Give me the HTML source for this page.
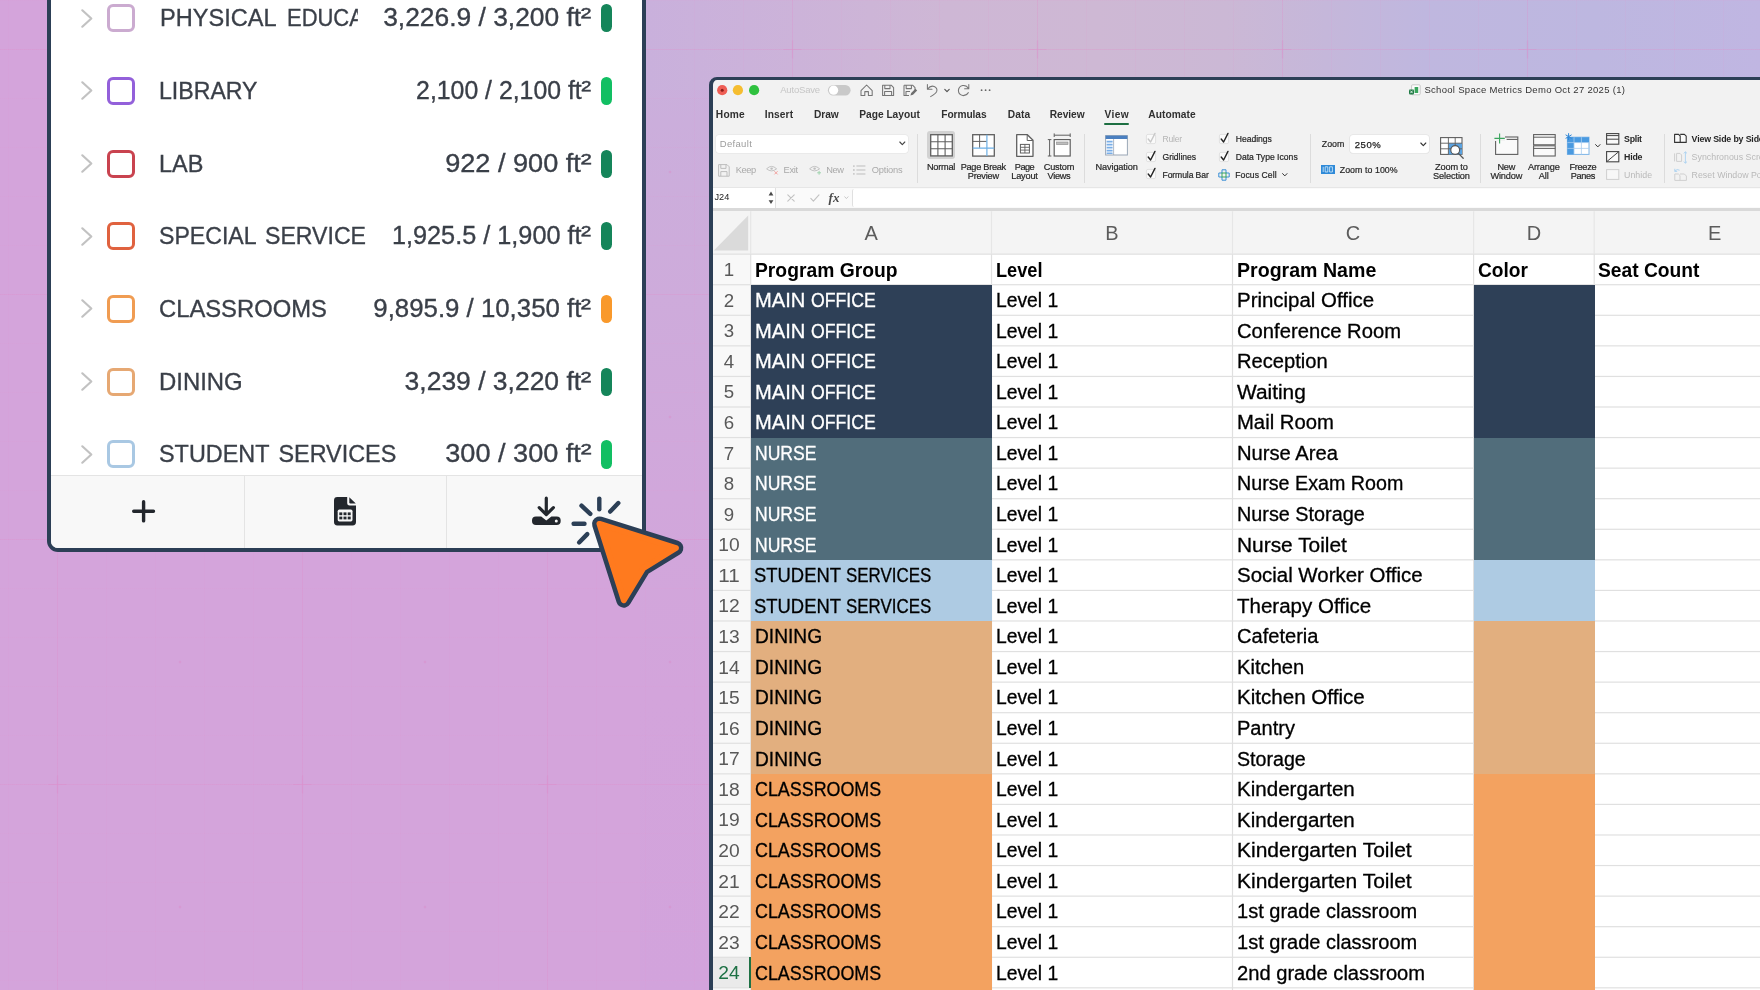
<!DOCTYPE html>
<html lang="en"><head><meta charset="utf-8"><title>School Space Metrics</title>
<style>
html,body{margin:0;padding:0}
body{width:1760px;height:990px;overflow:hidden;position:relative;background:#d5a5db;font-family:"Liberation Sans",sans-serif}
#root{position:absolute;left:0;top:0;width:1760px;height:990px;overflow:hidden;will-change:transform}
.t{position:absolute;white-space:nowrap;line-height:1;display:block}
svg{position:absolute;overflow:visible}
#bg{position:absolute;left:0;top:0;width:1760px;height:990px;background:#d4a4db}
#bgg{position:absolute;left:640px;top:0;width:80px;height:990px;background:linear-gradient(to bottom,#c9b0dc 0,#cdacdb 25%,#d1a7db 50%,#d3a4db 70%,#d2a3dc 100%)}
#bgt{position:absolute;left:646px;top:0;width:1114px;height:90px;background:linear-gradient(to right,#c9b0dc 0,#ccb3d9 150px,#ceb7d5 300px,#ceb8d4 450px,#cbb8d5 580px,#c5b7da 680px,#bfb7df 780px,#bdb7e0 950px,#c0b6e2 1114px)}
#grid{position:absolute;left:0;top:0;width:1760px;height:990px;
background-image:
linear-gradient(to right, rgba(226,130,196,0.17) 1px, transparent 1px),
linear-gradient(to bottom, rgba(226,130,196,0.17) 1px, transparent 1px),
linear-gradient(to right, rgba(226,150,205,0.10) 1px, transparent 1px),
linear-gradient(to bottom, rgba(226,150,205,0.10) 1px, transparent 1px);
background-size:245px 245px,245px 245px,49px 49px,49px 49px;
background-position:57px 0,0 49px,8px 0,0 0}
</style></head><body><div id="root">
<div id="bg"></div><div id="bgg"></div><div id="bgt"></div><div id="grid"></div>
<svg style="left:0.00px;top:0.00px" width="1760" height="990" viewBox="0 0 1760 990" ><path d="M48.5 49.5H66.5M57.5 40.5V58.5" stroke="#de86c6" stroke-opacity=".28" stroke-width="1.2"/><circle cx="180.0" cy="172.0" r="1.3" fill="#de86c6" fill-opacity=".35"/><path d="M48.5 294.5H66.5M57.5 285.5V303.5" stroke="#de86c6" stroke-opacity=".28" stroke-width="1.2"/><circle cx="180.0" cy="417.0" r="1.3" fill="#de86c6" fill-opacity=".35"/><path d="M48.5 539.5H66.5M57.5 530.5V548.5" stroke="#de86c6" stroke-opacity=".28" stroke-width="1.2"/><circle cx="180.0" cy="662.0" r="1.3" fill="#de86c6" fill-opacity=".35"/><path d="M48.5 784.5H66.5M57.5 775.5V793.5" stroke="#de86c6" stroke-opacity=".28" stroke-width="1.2"/><circle cx="180.0" cy="907.0" r="1.3" fill="#de86c6" fill-opacity=".35"/><path d="M48.5 1029.5H66.5M57.5 1020.5V1038.5" stroke="#de86c6" stroke-opacity=".28" stroke-width="1.2"/><circle cx="180.0" cy="1152.0" r="1.3" fill="#de86c6" fill-opacity=".35"/><path d="M293.5 49.5H311.5M302.5 40.5V58.5" stroke="#de86c6" stroke-opacity=".28" stroke-width="1.2"/><circle cx="425.0" cy="172.0" r="1.3" fill="#de86c6" fill-opacity=".35"/><path d="M293.5 294.5H311.5M302.5 285.5V303.5" stroke="#de86c6" stroke-opacity=".28" stroke-width="1.2"/><circle cx="425.0" cy="417.0" r="1.3" fill="#de86c6" fill-opacity=".35"/><path d="M293.5 539.5H311.5M302.5 530.5V548.5" stroke="#de86c6" stroke-opacity=".28" stroke-width="1.2"/><circle cx="425.0" cy="662.0" r="1.3" fill="#de86c6" fill-opacity=".35"/><path d="M293.5 784.5H311.5M302.5 775.5V793.5" stroke="#de86c6" stroke-opacity=".28" stroke-width="1.2"/><circle cx="425.0" cy="907.0" r="1.3" fill="#de86c6" fill-opacity=".35"/><path d="M293.5 1029.5H311.5M302.5 1020.5V1038.5" stroke="#de86c6" stroke-opacity=".28" stroke-width="1.2"/><circle cx="425.0" cy="1152.0" r="1.3" fill="#de86c6" fill-opacity=".35"/><path d="M538.5 49.5H556.5M547.5 40.5V58.5" stroke="#de86c6" stroke-opacity=".28" stroke-width="1.2"/><circle cx="670.0" cy="172.0" r="1.3" fill="#de86c6" fill-opacity=".35"/><path d="M538.5 294.5H556.5M547.5 285.5V303.5" stroke="#de86c6" stroke-opacity=".28" stroke-width="1.2"/><circle cx="670.0" cy="417.0" r="1.3" fill="#de86c6" fill-opacity=".35"/><path d="M538.5 539.5H556.5M547.5 530.5V548.5" stroke="#de86c6" stroke-opacity=".28" stroke-width="1.2"/><circle cx="670.0" cy="662.0" r="1.3" fill="#de86c6" fill-opacity=".35"/><path d="M538.5 784.5H556.5M547.5 775.5V793.5" stroke="#de86c6" stroke-opacity=".28" stroke-width="1.2"/><circle cx="670.0" cy="907.0" r="1.3" fill="#de86c6" fill-opacity=".35"/><path d="M538.5 1029.5H556.5M547.5 1020.5V1038.5" stroke="#de86c6" stroke-opacity=".28" stroke-width="1.2"/><circle cx="670.0" cy="1152.0" r="1.3" fill="#de86c6" fill-opacity=".35"/><path d="M783.5 49.5H801.5M792.5 40.5V58.5" stroke="#de86c6" stroke-opacity=".28" stroke-width="1.2"/><circle cx="915.0" cy="172.0" r="1.3" fill="#de86c6" fill-opacity=".35"/><path d="M783.5 294.5H801.5M792.5 285.5V303.5" stroke="#de86c6" stroke-opacity=".28" stroke-width="1.2"/><circle cx="915.0" cy="417.0" r="1.3" fill="#de86c6" fill-opacity=".35"/><path d="M783.5 539.5H801.5M792.5 530.5V548.5" stroke="#de86c6" stroke-opacity=".28" stroke-width="1.2"/><circle cx="915.0" cy="662.0" r="1.3" fill="#de86c6" fill-opacity=".35"/><path d="M783.5 784.5H801.5M792.5 775.5V793.5" stroke="#de86c6" stroke-opacity=".28" stroke-width="1.2"/><circle cx="915.0" cy="907.0" r="1.3" fill="#de86c6" fill-opacity=".35"/><path d="M783.5 1029.5H801.5M792.5 1020.5V1038.5" stroke="#de86c6" stroke-opacity=".28" stroke-width="1.2"/><circle cx="915.0" cy="1152.0" r="1.3" fill="#de86c6" fill-opacity=".35"/><path d="M1028.5 49.5H1046.5M1037.5 40.5V58.5" stroke="#de86c6" stroke-opacity=".28" stroke-width="1.2"/><circle cx="1160.0" cy="172.0" r="1.3" fill="#de86c6" fill-opacity=".35"/><path d="M1028.5 294.5H1046.5M1037.5 285.5V303.5" stroke="#de86c6" stroke-opacity=".28" stroke-width="1.2"/><circle cx="1160.0" cy="417.0" r="1.3" fill="#de86c6" fill-opacity=".35"/><path d="M1028.5 539.5H1046.5M1037.5 530.5V548.5" stroke="#de86c6" stroke-opacity=".28" stroke-width="1.2"/><circle cx="1160.0" cy="662.0" r="1.3" fill="#de86c6" fill-opacity=".35"/><path d="M1028.5 784.5H1046.5M1037.5 775.5V793.5" stroke="#de86c6" stroke-opacity=".28" stroke-width="1.2"/><circle cx="1160.0" cy="907.0" r="1.3" fill="#de86c6" fill-opacity=".35"/><path d="M1028.5 1029.5H1046.5M1037.5 1020.5V1038.5" stroke="#de86c6" stroke-opacity=".28" stroke-width="1.2"/><circle cx="1160.0" cy="1152.0" r="1.3" fill="#de86c6" fill-opacity=".35"/><path d="M1273.5 49.5H1291.5M1282.5 40.5V58.5" stroke="#de86c6" stroke-opacity=".28" stroke-width="1.2"/><circle cx="1405.0" cy="172.0" r="1.3" fill="#de86c6" fill-opacity=".35"/><path d="M1273.5 294.5H1291.5M1282.5 285.5V303.5" stroke="#de86c6" stroke-opacity=".28" stroke-width="1.2"/><circle cx="1405.0" cy="417.0" r="1.3" fill="#de86c6" fill-opacity=".35"/><path d="M1273.5 539.5H1291.5M1282.5 530.5V548.5" stroke="#de86c6" stroke-opacity=".28" stroke-width="1.2"/><circle cx="1405.0" cy="662.0" r="1.3" fill="#de86c6" fill-opacity=".35"/><path d="M1273.5 784.5H1291.5M1282.5 775.5V793.5" stroke="#de86c6" stroke-opacity=".28" stroke-width="1.2"/><circle cx="1405.0" cy="907.0" r="1.3" fill="#de86c6" fill-opacity=".35"/><path d="M1273.5 1029.5H1291.5M1282.5 1020.5V1038.5" stroke="#de86c6" stroke-opacity=".28" stroke-width="1.2"/><circle cx="1405.0" cy="1152.0" r="1.3" fill="#de86c6" fill-opacity=".35"/><path d="M1518.5 49.5H1536.5M1527.5 40.5V58.5" stroke="#de86c6" stroke-opacity=".28" stroke-width="1.2"/><circle cx="1650.0" cy="172.0" r="1.3" fill="#de86c6" fill-opacity=".35"/><path d="M1518.5 294.5H1536.5M1527.5 285.5V303.5" stroke="#de86c6" stroke-opacity=".28" stroke-width="1.2"/><circle cx="1650.0" cy="417.0" r="1.3" fill="#de86c6" fill-opacity=".35"/><path d="M1518.5 539.5H1536.5M1527.5 530.5V548.5" stroke="#de86c6" stroke-opacity=".28" stroke-width="1.2"/><circle cx="1650.0" cy="662.0" r="1.3" fill="#de86c6" fill-opacity=".35"/><path d="M1518.5 784.5H1536.5M1527.5 775.5V793.5" stroke="#de86c6" stroke-opacity=".28" stroke-width="1.2"/><circle cx="1650.0" cy="907.0" r="1.3" fill="#de86c6" fill-opacity=".35"/><path d="M1518.5 1029.5H1536.5M1527.5 1020.5V1038.5" stroke="#de86c6" stroke-opacity=".28" stroke-width="1.2"/><circle cx="1650.0" cy="1152.0" r="1.3" fill="#de86c6" fill-opacity=".35"/><path d="M1763.5 49.5H1781.5M1772.5 40.5V58.5" stroke="#de86c6" stroke-opacity=".28" stroke-width="1.2"/><circle cx="1895.0" cy="172.0" r="1.3" fill="#de86c6" fill-opacity=".35"/><path d="M1763.5 294.5H1781.5M1772.5 285.5V303.5" stroke="#de86c6" stroke-opacity=".28" stroke-width="1.2"/><circle cx="1895.0" cy="417.0" r="1.3" fill="#de86c6" fill-opacity=".35"/><path d="M1763.5 539.5H1781.5M1772.5 530.5V548.5" stroke="#de86c6" stroke-opacity=".28" stroke-width="1.2"/><circle cx="1895.0" cy="662.0" r="1.3" fill="#de86c6" fill-opacity=".35"/><path d="M1763.5 784.5H1781.5M1772.5 775.5V793.5" stroke="#de86c6" stroke-opacity=".28" stroke-width="1.2"/><circle cx="1895.0" cy="907.0" r="1.3" fill="#de86c6" fill-opacity=".35"/><path d="M1763.5 1029.5H1781.5M1772.5 1020.5V1038.5" stroke="#de86c6" stroke-opacity=".28" stroke-width="1.2"/><circle cx="1895.0" cy="1152.0" r="1.3" fill="#de86c6" fill-opacity=".35"/></svg>
<div style="position:absolute;left:47px;top:-20px;width:591px;height:564px;border:4px solid #2c3f56;border-radius:0 0 11px 11px;background:#fff;overflow:hidden"><div style="position:absolute;left:0;top:490.5px;width:100%;height:80px;background:#f8f8f8;border-top:1px solid #e4e4e4"></div><div style="position:absolute;left:193.2px;top:491px;width:1px;height:80px;background:#e4e4e4"></div><div style="position:absolute;left:395.0px;top:491px;width:1px;height:80px;background:#e4e4e4"></div></div>
<svg style="left:81.00px;top:8.80px" width="12" height="19" viewBox="0 0 12 19" ><path d="M1.3 1.3L10.3 9.5L1.3 17.7" fill="none" stroke="#c2c2c2" stroke-width="2.2" stroke-linecap="round" stroke-linejoin="round"/></svg>
<div style="position:absolute;left:106.80px;top:4.30px;width:22.00px;height:22.00px;border:3px solid #cbabd0;border-radius:6px;background:#fff"></div>
<div style="position:absolute;left:601.00px;top:4.30px;width:10.80px;height:28.20px;background:#15855a;border-radius:5.4px"></div>
<svg style="left:81.00px;top:81.47px" width="12" height="19" viewBox="0 0 12 19" ><path d="M1.3 1.3L10.3 9.5L1.3 17.7" fill="none" stroke="#c2c2c2" stroke-width="2.2" stroke-linecap="round" stroke-linejoin="round"/></svg>
<div style="position:absolute;left:106.80px;top:76.97px;width:22.00px;height:22.00px;border:3px solid #9360da;border-radius:6px;background:#fff"></div>
<div style="position:absolute;left:601.00px;top:76.97px;width:10.80px;height:28.20px;background:#12bf63;border-radius:5.4px"></div>
<svg style="left:81.00px;top:154.14px" width="12" height="19" viewBox="0 0 12 19" ><path d="M1.3 1.3L10.3 9.5L1.3 17.7" fill="none" stroke="#c2c2c2" stroke-width="2.2" stroke-linecap="round" stroke-linejoin="round"/></svg>
<div style="position:absolute;left:106.80px;top:149.64px;width:22.00px;height:22.00px;border:3px solid #c9434f;border-radius:6px;background:#fff"></div>
<div style="position:absolute;left:601.00px;top:149.64px;width:10.80px;height:28.20px;background:#15855a;border-radius:5.4px"></div>
<svg style="left:81.00px;top:226.81px" width="12" height="19" viewBox="0 0 12 19" ><path d="M1.3 1.3L10.3 9.5L1.3 17.7" fill="none" stroke="#c2c2c2" stroke-width="2.2" stroke-linecap="round" stroke-linejoin="round"/></svg>
<div style="position:absolute;left:106.80px;top:222.31px;width:22.00px;height:22.00px;border:3px solid #e0623f;border-radius:6px;background:#fff"></div>
<div style="position:absolute;left:601.00px;top:222.31px;width:10.80px;height:28.20px;background:#15855a;border-radius:5.4px"></div>
<svg style="left:81.00px;top:299.48px" width="12" height="19" viewBox="0 0 12 19" ><path d="M1.3 1.3L10.3 9.5L1.3 17.7" fill="none" stroke="#c2c2c2" stroke-width="2.2" stroke-linecap="round" stroke-linejoin="round"/></svg>
<div style="position:absolute;left:106.80px;top:294.98px;width:22.00px;height:22.00px;border:3px solid #f09c52;border-radius:6px;background:#fff"></div>
<div style="position:absolute;left:601.00px;top:294.98px;width:10.80px;height:28.20px;background:#f9992b;border-radius:5.4px"></div>
<svg style="left:81.00px;top:372.15px" width="12" height="19" viewBox="0 0 12 19" ><path d="M1.3 1.3L10.3 9.5L1.3 17.7" fill="none" stroke="#c2c2c2" stroke-width="2.2" stroke-linecap="round" stroke-linejoin="round"/></svg>
<div style="position:absolute;left:106.80px;top:367.65px;width:22.00px;height:22.00px;border:3px solid #e6a873;border-radius:6px;background:#fff"></div>
<div style="position:absolute;left:601.00px;top:367.65px;width:10.80px;height:28.20px;background:#15855a;border-radius:5.4px"></div>
<svg style="left:81.00px;top:444.82px" width="12" height="19" viewBox="0 0 12 19" ><path d="M1.3 1.3L10.3 9.5L1.3 17.7" fill="none" stroke="#c2c2c2" stroke-width="2.2" stroke-linecap="round" stroke-linejoin="round"/></svg>
<div style="position:absolute;left:106.80px;top:440.32px;width:22.00px;height:22.00px;border:3px solid #a9c8e3;border-radius:6px;background:#fff"></div>
<div style="position:absolute;left:601.00px;top:440.32px;width:10.80px;height:28.20px;background:#12bf63;border-radius:5.4px"></div>
<svg style="left:131.80px;top:499.90px" width="23.2" height="22.6" viewBox="0 0 23.2 22.6" ><path d="M11.6 1.7V20.9M1.7 11.3H21.5" stroke="#23272d" stroke-width="3.4" stroke-linecap="round" fill="none"/></svg>
<svg style="left:334.00px;top:496.80px" width="22" height="28.4" viewBox="0 0 22 28.4" ><path d="M3.4 0H13.2V6.2Q13.2 8.6 15.6 8.6H22V25Q22 28.4 18.6 28.4H3.4Q0 28.4 0 25V3.4Q0 0 3.4 0Z" fill="#23272d"/><path d="M15.3 0.2L21.8 6.6H16.6Q15.3 6.6 15.3 5.3Z" fill="#23272d"/><rect x="3.7" y="12.6" width="14.8" height="11.8" rx="1.6" fill="#f8f8f8"/><rect x="5.3" y="15.4" width="3" height="2.8" fill="#23272d"/><rect x="5.3" y="19.6" width="3" height="2.8" fill="#23272d"/><rect x="9.5" y="15.4" width="3" height="2.8" fill="#23272d"/><rect x="9.5" y="19.6" width="3" height="2.8" fill="#23272d"/><rect x="13.7" y="15.4" width="3" height="2.8" fill="#23272d"/><rect x="13.7" y="19.6" width="3" height="2.8" fill="#23272d"/></svg>
<svg style="left:532.30px;top:497.30px" width="28.7" height="28" viewBox="0 0 28.7 28" ><path d="M14.3 1.2V17.2M7.2 10.6L14.3 17.6L21.4 10.6" fill="none" stroke="#23272d" stroke-width="3.2" stroke-linecap="round" stroke-linejoin="round"/><path d="M4 19.4H9.2L14.3 23.4L19.4 19.4H24.7Q28.7 19.4 28.7 23.4V24Q28.7 28 24.7 28H4Q0 28 0 24V23.4Q0 19.4 4 19.4Z" fill="#23272d"/><circle cx="24.3" cy="23.9" r="1.5" fill="#f8f8f8"/></svg>
<div style="position:absolute;left:709px;top:77.4px;width:1100px;height:960px;border:4px solid #2c3f56;border-top-width:3.6px;border-radius:8px 0 0 0;background:#f2f2f2;box-sizing:border-box"></div>
<svg style="left:713.00px;top:81.00px" width="300" height="22" viewBox="0 0 300 22" ><circle cx="9.2" cy="9.2" r="5.1" fill="#ee5e55"/><circle cx="9.2" cy="9.2" r="1.5" fill="#8c1d18"/><circle cx="24.9" cy="9.2" r="5.1" fill="#f5bd30"/><circle cx="41.1" cy="9.2" r="5.1" fill="#2fc13f"/><rect x="114.9" y="3.9" width="22.7" height="10.6" rx="5.3" fill="#c9c9c9"/><circle cx="120.6" cy="9.2" r="4.6" fill="#fff"/><path d="M148 9.6L153.6 4L159.2 9.6V14.4H155.4V10.6H151.8V14.4H148Z" fill="none" stroke="#757575" stroke-width="1.05" stroke-linejoin="round"/><path d="M169.6 4.2H178.2L180.6 6.6V14.4H169.6Z M171.8 4.2V7.6H177V4.2 M171.6 14.4V10.4H178.6V14.4" fill="none" stroke="#757575" stroke-width="1.05" stroke-linejoin="round"/><path d="M191 4.2H199.6L202 6.6V9.4M196 14.4H191V4.2 M193.2 4.2V7.6H198.4V4.2 M193 14.4V10.4H197" fill="none" stroke="#757575" stroke-width="1.05" stroke-linejoin="round"/><path d="M197.4 14.6L198.2 12L202.4 7.8L204.2 9.6L200 13.8Z" fill="#6e6e6e"/><path d="M214.4 3.6V8.2H219 M214.6 8Q217.4 4.2 221.2 5.4Q224.6 6.8 223.8 10.2Q223 12.8 217.6 15.6" fill="none" stroke="#757575" stroke-width="1.05" stroke-linecap="round" stroke-linejoin="round"/><path d="M231.8 8.4L234 10.6L236.2 8.4" fill="none" stroke="#555" stroke-width="1.2" stroke-linecap="round" stroke-linejoin="round"/><path d="M255.8 3.6V7.8H251.6 M255.6 7.6Q253.4 4 249.6 4.6Q245.6 5.6 245.4 9.6Q245.6 13.8 249.8 14.6Q253.6 14.8 255.4 11.6" fill="none" stroke="#757575" stroke-width="1.05" stroke-linecap="round" stroke-linejoin="round"/><circle cx="268.6" cy="9.2" r="0.9" fill="#666"/><circle cx="272.6" cy="9.2" r="0.9" fill="#666"/><circle cx="276.6" cy="9.2" r="0.9" fill="#666"/></svg>
<svg style="left:1408.50px;top:84.00px" width="12" height="12" viewBox="0 0 12 12" ><rect x="2.6" y="0.8" width="8.6" height="10" rx="1" fill="#fdfdfd" stroke="#bdbdbd" stroke-width=".8"/><rect x="5.6" y="3" width="3.6" height="6" fill="#3aa55d"/><rect x="0" y="5.4" width="5" height="5" rx=".8" fill="#1f7a44"/><path d="M1.3 6.6L3.7 9.2M3.7 6.6L1.3 9.2" stroke="#fff" stroke-width=".8"/></svg>
<div style="position:absolute;left:1104.00px;top:123.00px;width:25.40px;height:2.30px;background:#1d6f42;border-radius:1px"></div>
<div style="position:absolute;left:715.80px;top:134.70px;width:192.00px;height:18.00px;background:#fff;border-radius:3px;box-shadow:0 0 0 .5px #e2e2e2"></div>
<svg style="left:899.00px;top:141.00px" width="7" height="5" viewBox="0 0 7 5" ><path d="M.8 1L3.3 3.6L5.8 1" fill="none" stroke="#444" stroke-width="1.1" stroke-linecap="round" stroke-linejoin="round"/></svg>
<svg style="left:718.00px;top:163.50px" width="12" height="13" viewBox="0 0 12 13" ><path d="M.6 .6H9L11.2 2.8V12.2H.6Z M2.8 .6V4.4H8V.6 M2.8 12.2V7.6H9V12.2" fill="none" stroke="#bdbdbd" stroke-width="1"/></svg>
<svg style="left:766.00px;top:165.00px" width="13" height="10" viewBox="0 0 13 10" ><path d="M.6 3.8Q5.5 -1 10.6 3.8Q5.5 8 .6 3.8Z" fill="none" stroke="#bdbdbd" stroke-width=".9"/><circle cx="5.6" cy="3.6" r="1.2" fill="#bdbdbd"/><path d="M8.4 6.2L11.6 9.4M11.6 6.2L8.4 9.4" stroke="#f2a3a0" stroke-width="1"/></svg>
<svg style="left:808.50px;top:165.00px" width="13" height="10" viewBox="0 0 13 10" ><path d="M.6 3.8Q5.5 -1 10.6 3.8Q5.5 8 .6 3.8Z" fill="none" stroke="#bdbdbd" stroke-width=".9"/><circle cx="5.6" cy="3.6" r="1.2" fill="#bdbdbd"/><path d="M8.2 7.8H12M10.1 5.9V9.7" stroke="#9fd3ae" stroke-width="1"/></svg>
<svg style="left:853.40px;top:164.50px" width="13" height="10" viewBox="0 0 13 10" ><path d="M3.4 1H12.4M3.4 5H12.4M3.4 9H12.4" stroke="#bdbdbd" stroke-width="1"/><path d="M.9 .2V9.8" stroke="#bdbdbd" stroke-width="1.2" stroke-dasharray="1.8 2.1"/></svg>
<div style="position:absolute;left:916.70px;top:133.80px;width:1.00px;height:49.00px;background:#dcdcdc"></div>
<div style="position:absolute;left:1084.10px;top:133.80px;width:1.00px;height:49.00px;background:#dcdcdc"></div>
<div style="position:absolute;left:1309.70px;top:133.80px;width:1.00px;height:49.00px;background:#dcdcdc"></div>
<div style="position:absolute;left:1480.00px;top:133.80px;width:1.00px;height:49.00px;background:#dcdcdc"></div>
<div style="position:absolute;left:1663.90px;top:133.80px;width:1.00px;height:49.00px;background:#dcdcdc"></div>
<div style="position:absolute;left:926.80px;top:131.20px;width:28.60px;height:28.20px;background:#d2d2d2;border-radius:3px"></div>
<svg style="left:929.60px;top:134.00px" width="23" height="22.6" viewBox="0 0 23 22.6" ><rect x=".7" y=".7" width="21.6" height="21.2" fill="#fff" stroke="#5f5f5f" stroke-width="1.3"/><path d="M7.9 .7V21.9M15.1 .7V21.9M.7 7.8H22.3M.7 14.8H22.3" stroke="#5f5f5f" stroke-width="1.1"/></svg>
<svg style="left:972.20px;top:133.80px" width="23" height="22.8" viewBox="0 0 23 22.8" ><rect x=".7" y=".7" width="21.6" height="21.4" fill="#fff" stroke="#5f5f5f" stroke-width="1.3"/><path d="M7.6 .7V13.8M.7 7.4H14.6" stroke="#5f5f5f" stroke-width="1"/><path d="M14.9 .7V22M.7 14.2H22.3" stroke="#6db0e6" stroke-width="1.2"/></svg>
<svg style="left:1015.60px;top:133.60px" width="18" height="23" viewBox="0 0 18 23" ><path d="M.7 .7H11.4L17 6.3V22.3H.7Z" fill="#fff" stroke="#5f5f5f" stroke-width="1.3" stroke-linejoin="round"/><path d="M11.2 .9V6.5H16.8" fill="none" stroke="#5f5f5f" stroke-width="1"/><rect x="4.4" y="10.4" width="9" height="8.6" fill="none" stroke="#5f5f5f" stroke-width="1"/><path d="M4.4 13.3H13.4M4.4 16.1H13.4M8.9 10.4V19" stroke="#5f5f5f" stroke-width=".9"/></svg>
<svg style="left:1047.60px;top:134.20px" width="23" height="23" viewBox="0 0 23 23" ><path d="M6.2 1.2H22.2M6.2 -.6V3M22.2 -.6V3M1.6 5.6V22M-.2 5.6H3.4M-.2 22H3.4" stroke="#5f5f5f" stroke-width="1" fill="none"/><rect x="6.2" y="5.6" width="16" height="16.4" fill="#fff" stroke="#5f5f5f" stroke-width="1.2"/><rect x="8.6" y="8" width="11.4" height="2.6" fill="#bdbdbd" stroke="#8a8a8a" stroke-width=".6"/></svg>
<svg style="left:1105.40px;top:134.60px" width="23" height="20.6" viewBox="0 0 23 20.6" ><rect x=".6" y=".6" width="21.8" height="19.4" fill="#fff" stroke="#9aa7b6" stroke-width="1"/><rect x=".6" y=".6" width="21.8" height="3.4" fill="#4a7fc0"/><path d="M8.6 4V20" stroke="#9aa7b6" stroke-width=".8"/><path d="M1.6 6.6H7.6M1.6 9.6H7.6M1.6 12.6H7.6M1.6 15.6H7.6M1.6 18.2H7.6" stroke="#79aee8" stroke-width="1.6"/></svg>
<svg style="left:1146.10px;top:134.40px" width="10" height="10" viewBox="0 0 10 10" ><rect x=".4" y=".4" width="9.2" height="9.2" rx="1.6" fill="#fafafa" stroke="#dadada" stroke-width=".8"/><path d="M2.2 5L4.6 8L9 -0.6" fill="none" stroke="#c8c8c8" stroke-width="1.4" stroke-linecap="round" stroke-linejoin="round"/></svg>
<svg style="left:1146.10px;top:151.60px" width="10" height="10" viewBox="0 0 10 10" ><rect x=".4" y=".4" width="9.2" height="9.2" rx="1.6" fill="#fafafa" stroke="#dadada" stroke-width=".8"/><path d="M2.2 5L4.6 8L9 -0.6" fill="none" stroke="#222" stroke-width="1.4" stroke-linecap="round" stroke-linejoin="round"/></svg>
<svg style="left:1146.10px;top:169.10px" width="10" height="10" viewBox="0 0 10 10" ><rect x=".4" y=".4" width="9.2" height="9.2" rx="1.6" fill="#fafafa" stroke="#dadada" stroke-width=".8"/><path d="M2.2 5L4.6 8L9 -0.6" fill="none" stroke="#222" stroke-width="1.4" stroke-linecap="round" stroke-linejoin="round"/></svg>
<svg style="left:1219.30px;top:134.40px" width="10" height="10" viewBox="0 0 10 10" ><rect x=".4" y=".4" width="9.2" height="9.2" rx="1.6" fill="#fafafa" stroke="#dadada" stroke-width=".8"/><path d="M2.2 5L4.6 8L9 -0.6" fill="none" stroke="#222" stroke-width="1.4" stroke-linecap="round" stroke-linejoin="round"/></svg>
<svg style="left:1219.30px;top:151.60px" width="10" height="10" viewBox="0 0 10 10" ><rect x=".4" y=".4" width="9.2" height="9.2" rx="1.6" fill="#fafafa" stroke="#dadada" stroke-width=".8"/><path d="M2.2 5L4.6 8L9 -0.6" fill="none" stroke="#222" stroke-width="1.4" stroke-linecap="round" stroke-linejoin="round"/></svg>
<svg style="left:1218.00px;top:168.60px" width="12" height="12" viewBox="0 0 12 12" ><path d="M4 .8H8V4H11.2V8H8V11.2H4V8H.8V4H4Z" fill="none" stroke="#3a8fd6" stroke-width="1"/><rect x="4" y="4" width="4" height="4" fill="none" stroke="#3aa55d" stroke-width="1"/></svg>
<svg style="left:1281.60px;top:172.60px" width="6" height="4" viewBox="0 0 6 4" ><path d="M.6 .6L2.8 2.9L5 .6" fill="none" stroke="#333" stroke-width="1" stroke-linecap="round" stroke-linejoin="round"/></svg>
<div style="position:absolute;left:1350.20px;top:134.90px;width:79.00px;height:18.40px;background:#fff;border-radius:3px;box-shadow:0 0 0 .6px #dedede"></div>
<svg style="left:1420.00px;top:141.60px" width="7" height="5" viewBox="0 0 7 5" ><path d="M.8 1L3.3 3.6L5.8 1" fill="none" stroke="#333" stroke-width="1.1" stroke-linecap="round" stroke-linejoin="round"/></svg>
<div style="position:absolute;left:1321.20px;top:165.20px;width:13.70px;height:8.50px;background:#2f8ad8"></div>
<svg style="left:1321.20px;top:165.20px" width="14" height="9" viewBox="0 0 14 9" ><path d="M2.2 1.8V7M4.2 1.8H6.8V7H4.2ZM8.6 1.8H11.4V7H8.6Z" fill="none" stroke="#d8ecfb" stroke-width=".8"/></svg>
<svg style="left:1439.70px;top:136.60px" width="25" height="22" viewBox="0 0 25 22" ><rect x=".6" y=".6" width="21.4" height="16.8" fill="#fff" stroke="#5f5f5f" stroke-width="1.1"/><rect x="8.4" y="6.2" width="13.6" height="11.2" fill="#5aa2e0"/><path d="M.6 6.2H22M.6 11.8H22M8.4 .6V17.4M15.2 .6V17.4" stroke="#5f5f5f" stroke-width=".9"/><circle cx="15.2" cy="13" r="4.4" fill="#fff" stroke="#555" stroke-width="1.1"/><path d="M18.4 16.4L23.2 21.2" stroke="#555" stroke-width="1.3" stroke-linecap="round"/></svg>
<svg style="left:1493.90px;top:132.70px" width="25" height="22" viewBox="0 0 25 22" ><rect x="1.6" y="4" width="22.2" height="17.4" fill="#fafafa" stroke="#5f5f5f" stroke-width="1.1"/><path d="M12.6 6.4H23.8" stroke="#5f5f5f" stroke-width="1.1"/><rect x="0" y="0" width="11" height="8" fill="#f2f2f2"/><path d="M5.6 .4V10.6M.4 5.4H10.8" stroke="#3aa55d" stroke-width="1.1"/></svg>
<svg style="left:1532.60px;top:134.00px" width="23" height="23" viewBox="0 0 23 23" ><rect x=".6" y=".6" width="21.6" height="10.2" fill="#fafafa" stroke="#5f5f5f" stroke-width="1.1"/><path d="M.6 3.2H22.2" stroke="#5f5f5f" stroke-width="1"/><rect x=".6" y="11.8" width="21.6" height="10.2" fill="#fafafa" stroke="#5f5f5f" stroke-width="1.1"/><path d="M.6 14.4H22.2" stroke="#5f5f5f" stroke-width="1"/></svg>
<svg style="left:1565.20px;top:132.70px" width="25" height="22" viewBox="0 0 25 22" ><rect x="2.4" y="4.2" width="21.6" height="17.2" fill="#fff" stroke="#7db4e6" stroke-width="1"/><rect x="2.4" y="4.2" width="21.6" height="5.4" fill="#4a9ae0"/><rect x="2.4" y="4.2" width="6.6" height="17.2" fill="#4a9ae0"/><path d="M9 4.2V21.4M16.4 4.2V21.4M2.4 9.6H24M2.4 15.4H24" stroke="#a9cdee" stroke-width=".8"/><path d="M3.6 .2V7M.6 1.8L6.6 5.4M6.6 1.8L.6 5.4" stroke="#2f86d6" stroke-width="1"/></svg>
<svg style="left:1594.60px;top:143.60px" width="6" height="4" viewBox="0 0 6 4" ><path d="M.6 .6L2.8 2.9L5 .6" fill="none" stroke="#333" stroke-width="1" stroke-linecap="round" stroke-linejoin="round"/></svg>
<svg style="left:1605.90px;top:133.00px" width="14" height="12" viewBox="0 0 14 12" ><rect x=".6" y=".6" width="12.2" height="10.6" fill="#fafafa" stroke="#444" stroke-width="1.1"/><path d="M.6 2.6H12.8M.6 6.2H12.8" stroke="#444" stroke-width="1"/></svg>
<svg style="left:1605.90px;top:151.20px" width="14" height="12" viewBox="0 0 14 12" ><rect x=".6" y=".6" width="12.2" height="10.2" fill="#fafafa" stroke="#444" stroke-width="1.1"/><path d="M.8 10.6L12.6 .8" stroke="#444" stroke-width="1"/></svg>
<svg style="left:1605.90px;top:169.00px" width="14" height="12" viewBox="0 0 14 12" ><rect x=".6" y=".6" width="12.2" height="9.8" fill="#f7f7f7" stroke="#cfcfcf" stroke-width="1"/></svg>
<svg style="left:1674.00px;top:133.40px" width="13" height="11" viewBox="0 0 13 11" ><path d="M.6 1.4H4.6L6.2 3V9.4H.6Z M6.2 1.4H10.4L12.2 3.2V9.4H6.2" fill="#fafafa" stroke="#333" stroke-width="1.1" stroke-linejoin="round"/></svg>
<svg style="left:1674.00px;top:150.60px" width="14" height="13" viewBox="0 0 14 13" ><path d="M.6 2.4V10.4M2.6 2.4H6L7.6 4V10.4H2.6Z" fill="none" stroke="#cfcfcf" stroke-width="1"/><path d="M11.4 .8V12.2M9.8 2.4L11.4 .8L13 2.4M9.8 10.6L11.4 12.2L13 10.6" fill="none" stroke="#a8d0f0" stroke-width=".9"/></svg>
<svg style="left:1674.00px;top:168.00px" width="14" height="13" viewBox="0 0 14 13" ><path d="M.8 6V12.4H6V7.6L4.4 6Z M6 6H10.4L12.4 8V12.4H6" fill="none" stroke="#cfcfcf" stroke-width="1"/><path d="M.8 3.2Q3 .4 5.6 2.2M.8 .8V3.4H3.2" fill="none" stroke="#a8d0f0" stroke-width=".9"/></svg>
<div style="position:absolute;left:713.00px;top:186.60px;width:1050.00px;height:1.00px;background:#e6e6e6"></div>
<div style="position:absolute;left:713.00px;top:187.60px;width:1050.00px;height:20.60px;background:#fafafa"></div>
<div style="position:absolute;left:713.00px;top:188.20px;width:61.80px;height:19.60px;background:#fff;border-right:1px solid #e0e0e0"></div>
<div style="position:absolute;left:852.00px;top:189.00px;width:910.00px;height:18.00px;background:#fff;border-left:1px solid #e0e0e0;border-radius:2px 0 0 2px"></div>
<svg style="left:767.80px;top:190.60px" width="6" height="14" viewBox="0 0 6 14" ><path d="M3 .6L5.4 4.4H.6Z M3 13L5.4 9.2H.6Z" fill="#4a4a4a"/></svg>
<svg style="left:787.00px;top:193.60px" width="8" height="8" viewBox="0 0 8 8" ><path d="M.8 .8L7.2 7.2M7.2 .8L.8 7.2" stroke="#c2c2c2" stroke-width="1.1" stroke-linecap="round"/></svg>
<svg style="left:810.00px;top:193.60px" width="10" height="8" viewBox="0 0 10 8" ><path d="M.8 4.4L3.4 7.2L9 .8" fill="none" stroke="#c2c2c2" stroke-width="1.1" stroke-linecap="round" stroke-linejoin="round"/></svg>
<svg style="left:844.40px;top:196.40px" width="5" height="4" viewBox="0 0 5 4" ><path d="M.5 .5L2.4 2.6L4.3 .5" fill="none" stroke="#c2c2c2" stroke-width=".9"/></svg>
<div style="position:absolute;left:713.00px;top:208.20px;width:1050.00px;height:3.00px;background:#d9d9d9"></div>
<div style="position:absolute;left:713.00px;top:211.20px;width:1050.00px;height:42.95px;background:#f4f4f4"></div>
<div style="position:absolute;left:713.00px;top:254.15px;width:1050.00px;height:740.85px;background:#fff"></div>
<div style="position:absolute;left:713.00px;top:254.15px;width:37.70px;height:740.85px;background:#f8f8f8"></div>
<div style="position:absolute;left:713.00px;top:957.26px;width:37.70px;height:30.57px;background:#eaeaea"></div>
<svg style="left:713.00px;top:211.20px" width="38" height="44" viewBox="0 0 38 44" ><path d="M0.9 39.5L35.2 4.4V39.5Z" fill="#dadada"/></svg>
<svg style="left:713.00px;top:0.00px" width="1050" height="995" viewBox="0 0 1050 995" ><rect x="0" y="253.55" width="1050" height="1.2" fill="#e0e0e0"/><rect x="0" y="284.12" width="1050" height="1.2" fill="#e0e0e0"/><rect x="0" y="314.69" width="1050" height="1.2" fill="#e0e0e0"/><rect x="0" y="345.26" width="1050" height="1.2" fill="#e0e0e0"/><rect x="0" y="375.83" width="1050" height="1.2" fill="#e0e0e0"/><rect x="0" y="406.40" width="1050" height="1.2" fill="#e0e0e0"/><rect x="0" y="436.97" width="1050" height="1.2" fill="#e0e0e0"/><rect x="0" y="467.54" width="1050" height="1.2" fill="#e0e0e0"/><rect x="0" y="498.11" width="1050" height="1.2" fill="#e0e0e0"/><rect x="0" y="528.68" width="1050" height="1.2" fill="#e0e0e0"/><rect x="0" y="559.25" width="1050" height="1.2" fill="#e0e0e0"/><rect x="0" y="589.82" width="1050" height="1.2" fill="#e0e0e0"/><rect x="0" y="620.39" width="1050" height="1.2" fill="#e0e0e0"/><rect x="0" y="650.96" width="1050" height="1.2" fill="#e0e0e0"/><rect x="0" y="681.53" width="1050" height="1.2" fill="#e0e0e0"/><rect x="0" y="712.10" width="1050" height="1.2" fill="#e0e0e0"/><rect x="0" y="742.67" width="1050" height="1.2" fill="#e0e0e0"/><rect x="0" y="773.24" width="1050" height="1.2" fill="#e0e0e0"/><rect x="0" y="803.81" width="1050" height="1.2" fill="#e0e0e0"/><rect x="0" y="834.38" width="1050" height="1.2" fill="#e0e0e0"/><rect x="0" y="864.95" width="1050" height="1.2" fill="#e0e0e0"/><rect x="0" y="895.52" width="1050" height="1.2" fill="#e0e0e0"/><rect x="0" y="926.09" width="1050" height="1.2" fill="#e0e0e0"/><rect x="0" y="956.66" width="1050" height="1.2" fill="#e0e0e0"/><rect x="0" y="987.23" width="1050" height="1.2" fill="#e0e0e0"/><rect x="0" y="1017.80" width="1050" height="1.2" fill="#e0e0e0"/><rect x="37.10" y="211.2" width="1.2" height="42.95000000000002" fill="#e6e6e6"/><rect x="37.10" y="254.15" width="1.2" height="800" fill="#e0e0e0"/><rect x="277.90" y="211.2" width="1.2" height="42.95000000000002" fill="#e6e6e6"/><rect x="277.90" y="254.15" width="1.2" height="800" fill="#e0e0e0"/><rect x="518.90" y="211.2" width="1.2" height="42.95000000000002" fill="#e6e6e6"/><rect x="518.90" y="254.15" width="1.2" height="800" fill="#e0e0e0"/><rect x="760.00" y="211.2" width="1.2" height="42.95000000000002" fill="#e6e6e6"/><rect x="760.00" y="254.15" width="1.2" height="800" fill="#e0e0e0"/><rect x="880.60" y="211.2" width="1.2" height="42.95000000000002" fill="#e6e6e6"/><rect x="880.60" y="254.15" width="1.2" height="800" fill="#e0e0e0"/></svg>
<div style="position:absolute;left:750.70px;top:284.72px;width:241.30px;height:153.25px;background:#2e4057"></div>
<div style="position:absolute;left:1473.60px;top:284.72px;width:121.20px;height:153.25px;background:#2e4057"></div>
<div style="position:absolute;left:750.70px;top:437.57px;width:241.30px;height:122.68px;background:#516d7b"></div>
<div style="position:absolute;left:1473.60px;top:437.57px;width:121.20px;height:122.68px;background:#516d7b"></div>
<div style="position:absolute;left:750.70px;top:559.85px;width:241.30px;height:61.54px;background:#aecbe3"></div>
<div style="position:absolute;left:1473.60px;top:559.85px;width:121.20px;height:61.54px;background:#aecbe3"></div>
<div style="position:absolute;left:750.70px;top:620.99px;width:241.30px;height:153.25px;background:#e2af7f"></div>
<div style="position:absolute;left:1473.60px;top:620.99px;width:121.20px;height:153.25px;background:#e2af7f"></div>
<div style="position:absolute;left:750.70px;top:773.84px;width:241.30px;height:244.96px;background:#f3a260"></div>
<div style="position:absolute;left:1473.60px;top:773.84px;width:121.20px;height:244.96px;background:#f3a260"></div>
<div style="position:absolute;left:749.40px;top:957.26px;width:1.30px;height:30.57px;background:#1e7145"></div>
<span class="t" style="left:159.60px;top:6.36px;font-size:24.2px;color:#3a3f48;transform:scaleX(0.9737);transform-origin:left center;-webkit-text-stroke:0.35px #3a3f48;">PHYSICAL</span>
<span class="t" style="left:286.60px;top:6.36px;font-size:24.2px;color:#3a3f48;-webkit-text-stroke:0.35px #3a3f48;width:78px;overflow:hidden;transform:scaleX(0.908);transform-origin:left center;">EDUCATION</span>
<span class="t" style="left:590.60px;top:5.28px;font-size:25.3px;color:#3a3f48;transform:translateX(-100%) scaleX(1.0426);transform-origin:right center;-webkit-text-stroke:0.35px #3a3f48;">3,226.9 / 3,200 ft<span style="display:inline-block;transform:translate(-0.6px,-1.3px) scale(1.2,1.04);transform-origin:left bottom;margin-right:1px">²</span></span>
<span class="t" style="left:159.20px;top:79.03px;font-size:24.2px;color:#3a3f48;transform:scaleX(0.9556);transform-origin:left center;-webkit-text-stroke:0.35px #3a3f48;">LIBRARY</span>
<span class="t" style="left:590.60px;top:77.95px;font-size:25.3px;color:#3a3f48;transform:translateX(-100%) scaleX(0.9814);transform-origin:right center;-webkit-text-stroke:0.35px #3a3f48;">2,100 / 2,100 ft<span style="display:inline-block;transform:translate(-0.6px,-1.3px) scale(1.2,1.04);transform-origin:left bottom;margin-right:1px">²</span></span>
<span class="t" style="left:159.20px;top:151.70px;font-size:24.2px;color:#3a3f48;transform:scaleX(0.9705);transform-origin:left center;-webkit-text-stroke:0.35px #3a3f48;">LAB</span>
<span class="t" style="left:590.60px;top:150.62px;font-size:25.3px;color:#3a3f48;transform:translateX(-100%) scaleX(1.0718);transform-origin:right center;-webkit-text-stroke:0.35px #3a3f48;">922 / 900 ft<span style="display:inline-block;transform:translate(-0.6px,-1.3px) scale(1.2,1.04);transform-origin:left bottom;margin-right:1px">²</span></span>
<span class="t" style="left:159.20px;top:224.37px;font-size:24.2px;color:#3a3f48;transform:scaleX(0.9550);transform-origin:left center;-webkit-text-stroke:0.35px #3a3f48;word-spacing:3px;">SPECIAL SERVICE</span>
<span class="t" style="left:590.60px;top:223.29px;font-size:25.3px;color:#3a3f48;transform:translateX(-100%) scaleX(0.9989);transform-origin:right center;-webkit-text-stroke:0.35px #3a3f48;">1,925.5 / 1,900 ft<span style="display:inline-block;transform:translate(-0.6px,-1.3px) scale(1.2,1.04);transform-origin:left bottom;margin-right:1px">²</span></span>
<span class="t" style="left:159.20px;top:297.04px;font-size:24.2px;color:#3a3f48;transform:scaleX(0.9830);transform-origin:left center;-webkit-text-stroke:0.35px #3a3f48;">CLASSROOMS</span>
<span class="t" style="left:590.60px;top:295.96px;font-size:25.3px;color:#3a3f48;transform:translateX(-100%) scaleX(1.0202);transform-origin:right center;-webkit-text-stroke:0.35px #3a3f48;">9,895.9 / 10,350 ft<span style="display:inline-block;transform:translate(-0.6px,-1.3px) scale(1.2,1.04);transform-origin:left bottom;margin-right:1px">²</span></span>
<span class="t" style="left:159.20px;top:369.71px;font-size:24.2px;color:#3a3f48;transform:scaleX(0.9887);transform-origin:left center;-webkit-text-stroke:0.35px #3a3f48;">DINING</span>
<span class="t" style="left:590.60px;top:368.63px;font-size:25.3px;color:#3a3f48;transform:translateX(-100%) scaleX(1.0459);transform-origin:right center;-webkit-text-stroke:0.35px #3a3f48;">3,239 / 3,220 ft<span style="display:inline-block;transform:translate(-0.6px,-1.3px) scale(1.2,1.04);transform-origin:left bottom;margin-right:1px">²</span></span>
<span class="t" style="left:159.20px;top:442.38px;font-size:24.2px;color:#3a3f48;transform:scaleX(0.9670);transform-origin:left center;-webkit-text-stroke:0.35px #3a3f48;word-spacing:3px;">STUDENT SERVICES</span>
<span class="t" style="left:590.60px;top:441.30px;font-size:25.3px;color:#3a3f48;transform:translateX(-100%) scaleX(1.0711);transform-origin:right center;-webkit-text-stroke:0.35px #3a3f48;">300 / 300 ft<span style="display:inline-block;transform:translate(-0.6px,-1.3px) scale(1.2,1.04);transform-origin:left bottom;margin-right:1px">²</span></span>
<span class="t" style="left:780.20px;top:85.16px;font-size:9.5px;color:#c6c6c6;letter-spacing:-0.188px;">AutoSave</span>
<span class="t" style="left:1424.40px;top:84.86px;font-size:9.5px;color:#333;letter-spacing:0.300px;">School Space Metrics Demo Oct 27 2025 (1)</span>
<span class="t" style="left:715.80px;top:110.37px;font-size:10.2px;color:#303030;font-weight:700;letter-spacing:0.222px;">Home</span>
<span class="t" style="left:764.70px;top:110.37px;font-size:10.2px;color:#303030;font-weight:700;letter-spacing:0.125px;">Insert</span>
<span class="t" style="left:813.90px;top:110.37px;font-size:10.2px;color:#303030;font-weight:700;letter-spacing:-0.005px;">Draw</span>
<span class="t" style="left:859.20px;top:110.37px;font-size:10.2px;color:#303030;font-weight:700;letter-spacing:0.002px;">Page Layout</span>
<span class="t" style="left:941.30px;top:110.37px;font-size:10.2px;color:#303030;font-weight:700;letter-spacing:-0.082px;">Formulas</span>
<span class="t" style="left:1007.70px;top:110.37px;font-size:10.2px;color:#303030;font-weight:700;letter-spacing:0.152px;">Data</span>
<span class="t" style="left:1049.70px;top:110.37px;font-size:10.2px;color:#303030;font-weight:700;letter-spacing:-0.035px;">Review</span>
<span class="t" style="left:1104.50px;top:110.37px;font-size:10.2px;color:#303030;font-weight:700;letter-spacing:0.342px;">View</span>
<span class="t" style="left:1148.30px;top:110.37px;font-size:10.2px;color:#303030;font-weight:700;letter-spacing:0.052px;">Automate</span>
<span class="t" style="left:719.70px;top:138.76px;font-size:9.5px;color:#9c9c9c;letter-spacing:0.342px;">Default</span>
<span class="t" style="left:735.70px;top:165.73px;font-size:9.3px;color:#a9a9a9;letter-spacing:-0.405px;">Keep</span>
<span class="t" style="left:783.60px;top:165.73px;font-size:9.3px;color:#a9a9a9;letter-spacing:-0.300px;">Exit</span>
<span class="t" style="left:826.20px;top:165.73px;font-size:9.3px;color:#a9a9a9;letter-spacing:-0.470px;">New</span>
<span class="t" style="left:871.70px;top:165.73px;font-size:9.3px;color:#a9a9a9;letter-spacing:-0.164px;">Options</span>
<span class="t" style="left:941.00px;top:162.61px;font-size:9.2px;color:#262626;letter-spacing:-0.252px;transform:translateX(-50%);-webkit-text-stroke:0.2px #262626;">Normal</span>
<span class="t" style="left:983.30px;top:162.61px;font-size:9.2px;color:#262626;letter-spacing:-0.282px;transform:translateX(-50%);-webkit-text-stroke:0.2px #262626;">Page Break</span>
<span class="t" style="left:983.30px;top:172.31px;font-size:9.2px;color:#262626;letter-spacing:-0.241px;transform:translateX(-50%);-webkit-text-stroke:0.2px #262626;">Preview</span>
<span class="t" style="left:1024.50px;top:162.61px;font-size:9.2px;color:#262626;letter-spacing:-0.492px;transform:translateX(-50%);-webkit-text-stroke:0.2px #262626;">Page</span>
<span class="t" style="left:1024.50px;top:172.31px;font-size:9.2px;color:#262626;letter-spacing:-0.182px;transform:translateX(-50%);-webkit-text-stroke:0.2px #262626;">Layout</span>
<span class="t" style="left:1059.00px;top:162.61px;font-size:9.2px;color:#262626;letter-spacing:-0.193px;transform:translateX(-50%);-webkit-text-stroke:0.2px #262626;">Custom</span>
<span class="t" style="left:1059.00px;top:172.31px;font-size:9.2px;color:#262626;letter-spacing:-0.309px;transform:translateX(-50%);-webkit-text-stroke:0.2px #262626;">Views</span>
<span class="t" style="left:1116.60px;top:162.61px;font-size:9.2px;color:#262626;letter-spacing:-0.122px;transform:translateX(-50%);-webkit-text-stroke:0.2px #262626;">Navigation</span>
<span class="t" style="left:1162.50px;top:135.42px;font-size:8.6px;color:#b5b5b5;letter-spacing:-0.229px;">Ruler</span>
<span class="t" style="left:1162.50px;top:153.22px;font-size:8.6px;color:#262626;letter-spacing:-0.036px;-webkit-text-stroke:0.2px #262626;">Gridlines</span>
<span class="t" style="left:1162.50px;top:170.62px;font-size:8.6px;color:#262626;letter-spacing:-0.098px;-webkit-text-stroke:0.2px #262626;">Formula Bar</span>
<span class="t" style="left:1235.70px;top:135.42px;font-size:8.6px;color:#262626;letter-spacing:-0.014px;-webkit-text-stroke:0.2px #262626;">Headings</span>
<span class="t" style="left:1235.70px;top:153.22px;font-size:8.6px;color:#262626;letter-spacing:0.003px;-webkit-text-stroke:0.2px #262626;">Data Type Icons</span>
<span class="t" style="left:1235.20px;top:170.62px;font-size:8.6px;color:#262626;letter-spacing:0.091px;-webkit-text-stroke:0.2px #262626;">Focus Cell</span>
<span class="t" style="left:1321.80px;top:140.15px;font-size:8.8px;color:#262626;-webkit-text-stroke:0.2px #262626;">Zoom</span>
<span class="t" style="left:1354.80px;top:139.56px;font-size:9.5px;color:#222;letter-spacing:0.522px;-webkit-text-stroke:0.25px #222;">250%</span>
<span class="t" style="left:1339.70px;top:166.15px;font-size:8.8px;color:#262626;letter-spacing:0.065px;-webkit-text-stroke:0.2px #262626;">Zoom to 100%</span>
<span class="t" style="left:1451.40px;top:162.61px;font-size:9.2px;color:#262626;letter-spacing:-0.158px;transform:translateX(-50%);-webkit-text-stroke:0.2px #262626;">Zoom to</span>
<span class="t" style="left:1451.40px;top:172.31px;font-size:9.2px;color:#262626;letter-spacing:-0.089px;transform:translateX(-50%);-webkit-text-stroke:0.2px #262626;">Selection</span>
<span class="t" style="left:1506.30px;top:162.61px;font-size:9.2px;color:#262626;letter-spacing:-0.264px;transform:translateX(-50%);-webkit-text-stroke:0.2px #262626;">New</span>
<span class="t" style="left:1506.30px;top:172.31px;font-size:9.2px;color:#262626;letter-spacing:-0.181px;transform:translateX(-50%);-webkit-text-stroke:0.2px #262626;">Window</span>
<span class="t" style="left:1543.80px;top:162.61px;font-size:9.2px;color:#262626;letter-spacing:-0.127px;transform:translateX(-50%);-webkit-text-stroke:0.2px #262626;">Arrange</span>
<span class="t" style="left:1543.80px;top:172.31px;font-size:9.2px;color:#262626;letter-spacing:-0.073px;transform:translateX(-50%);-webkit-text-stroke:0.2px #262626;">All</span>
<span class="t" style="left:1582.90px;top:162.61px;font-size:9.2px;color:#262626;letter-spacing:-0.268px;transform:translateX(-50%);-webkit-text-stroke:0.2px #262626;">Freeze</span>
<span class="t" style="left:1582.90px;top:172.31px;font-size:9.2px;color:#262626;letter-spacing:-0.333px;transform:translateX(-50%);-webkit-text-stroke:0.2px #262626;">Panes</span>
<span class="t" style="left:1624.10px;top:135.05px;font-size:8.8px;color:#262626;font-weight:700;letter-spacing:-0.292px;">Split</span>
<span class="t" style="left:1624.10px;top:152.65px;font-size:8.8px;color:#262626;font-weight:700;letter-spacing:-0.220px;">Hide</span>
<span class="t" style="left:1624.10px;top:170.75px;font-size:8.8px;color:#b9b9b9;letter-spacing:0.018px;">Unhide</span>
<span class="t" style="left:1691.60px;top:135.05px;font-size:8.8px;color:#262626;font-weight:700;letter-spacing:-0.155px;">View Side by Side</span>
<span class="t" style="left:1691.60px;top:152.65px;font-size:8.8px;color:#b9b9b9;letter-spacing:0.018px;">Synchronous Scrolling</span>
<span class="t" style="left:1691.60px;top:170.75px;font-size:8.8px;color:#b9b9b9;letter-spacing:0.018px;">Reset Window Position</span>
<span class="t" style="left:714.60px;top:193.01px;font-size:9.2px;color:#222;letter-spacing:-0.076px;">J24</span>
<span class="t" style="left:828.60px;top:190.60px;font-size:13px;color:#4a4a4a;font-family:'Liberation Serif',serif;font-style:italic;font-weight:700;">fx</span>
<span class="t" style="left:871.10px;top:223.47px;font-size:20px;color:#5c5c5c;transform:translateX(-50%);">A</span>
<span class="t" style="left:1112.00px;top:223.47px;font-size:20px;color:#5c5c5c;transform:translateX(-50%);">B</span>
<span class="t" style="left:1353.05px;top:223.47px;font-size:20px;color:#5c5c5c;transform:translateX(-50%);">C</span>
<span class="t" style="left:1533.90px;top:223.47px;font-size:20px;color:#5c5c5c;transform:translateX(-50%);">D</span>
<span class="t" style="left:1714.60px;top:223.47px;font-size:20px;color:#5c5c5c;transform:translateX(-50%);">E</span>
<span class="t" style="left:728.60px;top:261.14px;font-size:18.8px;color:#595959;transform:translateX(-50%) scaleX(0.9949);transform-origin:center;">1</span>
<span class="t" style="left:755.00px;top:260.63px;font-size:19.4px;color:#000;font-weight:700;transform:scaleX(0.9944);transform-origin:left center;">Program Group</span>
<span class="t" style="left:995.60px;top:260.63px;font-size:19.4px;color:#000;font-weight:700;transform:scaleX(0.9376);transform-origin:left center;">Level</span>
<span class="t" style="left:1237.30px;top:260.63px;font-size:19.4px;color:#000;font-weight:700;transform:scaleX(1.0098);transform-origin:left center;">Program Name</span>
<span class="t" style="left:1477.60px;top:260.63px;font-size:19.4px;color:#000;font-weight:700;transform:scaleX(0.9873);transform-origin:left center;">Color</span>
<span class="t" style="left:1598.30px;top:260.63px;font-size:19.4px;color:#000;font-weight:700;transform:scaleX(0.9918);transform-origin:left center;">Seat Count</span>
<span class="t" style="left:728.60px;top:291.71px;font-size:18.8px;color:#595959;transform:translateX(-50%) scaleX(0.9949);transform-origin:center;">2</span>
<span class="t" style="left:755.00px;top:291.06px;font-size:19.5px;color:#fff;transform:scaleX(1.0318);transform-origin:left center;-webkit-text-stroke:0.3px #fff;">MAIN</span>
<span class="t" style="left:810.70px;top:291.06px;font-size:19.5px;color:#fff;transform:scaleX(0.9049);transform-origin:left center;-webkit-text-stroke:0.3px #fff;">OFFICE</span>
<span class="t" style="left:996.00px;top:291.06px;font-size:19.5px;color:#000;transform:scaleX(0.9890);transform-origin:left center;-webkit-text-stroke:0.3px #000;">Level 1</span>
<span class="t" style="left:1237.30px;top:291.06px;font-size:19.5px;color:#000;transform:scaleX(1.0476);transform-origin:left center;-webkit-text-stroke:0.3px #000;">Principal Office</span>
<span class="t" style="left:728.60px;top:322.28px;font-size:18.8px;color:#595959;transform:translateX(-50%) scaleX(0.9949);transform-origin:center;">3</span>
<span class="t" style="left:755.00px;top:321.63px;font-size:19.5px;color:#fff;transform:scaleX(1.0318);transform-origin:left center;-webkit-text-stroke:0.3px #fff;">MAIN</span>
<span class="t" style="left:810.70px;top:321.63px;font-size:19.5px;color:#fff;transform:scaleX(0.9049);transform-origin:left center;-webkit-text-stroke:0.3px #fff;">OFFICE</span>
<span class="t" style="left:996.00px;top:321.63px;font-size:19.5px;color:#000;transform:scaleX(0.9890);transform-origin:left center;-webkit-text-stroke:0.3px #000;">Level 1</span>
<span class="t" style="left:1237.30px;top:321.63px;font-size:19.5px;color:#000;transform:scaleX(1.0363);transform-origin:left center;-webkit-text-stroke:0.3px #000;">Conference Room</span>
<span class="t" style="left:728.60px;top:352.85px;font-size:18.8px;color:#595959;transform:translateX(-50%) scaleX(0.9949);transform-origin:center;">4</span>
<span class="t" style="left:755.00px;top:352.20px;font-size:19.5px;color:#fff;transform:scaleX(1.0318);transform-origin:left center;-webkit-text-stroke:0.3px #fff;">MAIN</span>
<span class="t" style="left:810.70px;top:352.20px;font-size:19.5px;color:#fff;transform:scaleX(0.9049);transform-origin:left center;-webkit-text-stroke:0.3px #fff;">OFFICE</span>
<span class="t" style="left:996.00px;top:352.20px;font-size:19.5px;color:#000;transform:scaleX(0.9890);transform-origin:left center;-webkit-text-stroke:0.3px #000;">Level 1</span>
<span class="t" style="left:1237.30px;top:352.20px;font-size:19.5px;color:#000;transform:scaleX(1.0329);transform-origin:left center;-webkit-text-stroke:0.3px #000;">Reception</span>
<span class="t" style="left:728.60px;top:383.42px;font-size:18.8px;color:#595959;transform:translateX(-50%) scaleX(0.9949);transform-origin:center;">5</span>
<span class="t" style="left:755.00px;top:382.77px;font-size:19.5px;color:#fff;transform:scaleX(1.0318);transform-origin:left center;-webkit-text-stroke:0.3px #fff;">MAIN</span>
<span class="t" style="left:810.70px;top:382.77px;font-size:19.5px;color:#fff;transform:scaleX(0.9049);transform-origin:left center;-webkit-text-stroke:0.3px #fff;">OFFICE</span>
<span class="t" style="left:996.00px;top:382.77px;font-size:19.5px;color:#000;transform:scaleX(0.9890);transform-origin:left center;-webkit-text-stroke:0.3px #000;">Level 1</span>
<span class="t" style="left:1237.30px;top:382.77px;font-size:19.5px;color:#000;transform:scaleX(1.0698);transform-origin:left center;-webkit-text-stroke:0.3px #000;">Waiting</span>
<span class="t" style="left:728.60px;top:413.99px;font-size:18.8px;color:#595959;transform:translateX(-50%) scaleX(0.9949);transform-origin:center;">6</span>
<span class="t" style="left:755.00px;top:413.34px;font-size:19.5px;color:#fff;transform:scaleX(1.0318);transform-origin:left center;-webkit-text-stroke:0.3px #fff;">MAIN</span>
<span class="t" style="left:810.70px;top:413.34px;font-size:19.5px;color:#fff;transform:scaleX(0.9049);transform-origin:left center;-webkit-text-stroke:0.3px #fff;">OFFICE</span>
<span class="t" style="left:996.00px;top:413.34px;font-size:19.5px;color:#000;transform:scaleX(0.9890);transform-origin:left center;-webkit-text-stroke:0.3px #000;">Level 1</span>
<span class="t" style="left:1237.30px;top:413.34px;font-size:19.5px;color:#000;transform:scaleX(1.0388);transform-origin:left center;-webkit-text-stroke:0.3px #000;">Mail Room</span>
<span class="t" style="left:728.60px;top:444.56px;font-size:18.8px;color:#595959;transform:translateX(-50%) scaleX(0.9949);transform-origin:center;">7</span>
<span class="t" style="left:755.00px;top:443.91px;font-size:19.5px;color:#fff;transform:scaleX(0.9009);transform-origin:left center;-webkit-text-stroke:0.3px #fff;">NURSE</span>
<span class="t" style="left:996.00px;top:443.91px;font-size:19.5px;color:#000;transform:scaleX(0.9890);transform-origin:left center;-webkit-text-stroke:0.3px #000;">Level 1</span>
<span class="t" style="left:1237.30px;top:443.91px;font-size:19.5px;color:#000;transform:scaleX(1.0352);transform-origin:left center;-webkit-text-stroke:0.3px #000;">Nurse Area</span>
<span class="t" style="left:728.60px;top:475.13px;font-size:18.8px;color:#595959;transform:translateX(-50%) scaleX(0.9949);transform-origin:center;">8</span>
<span class="t" style="left:755.00px;top:474.48px;font-size:19.5px;color:#fff;transform:scaleX(0.9009);transform-origin:left center;-webkit-text-stroke:0.3px #fff;">NURSE</span>
<span class="t" style="left:996.00px;top:474.48px;font-size:19.5px;color:#000;transform:scaleX(0.9890);transform-origin:left center;-webkit-text-stroke:0.3px #000;">Level 1</span>
<span class="t" style="left:1237.30px;top:474.48px;font-size:19.5px;color:#000;transform:scaleX(1.0102);transform-origin:left center;-webkit-text-stroke:0.3px #000;">Nurse Exam Room</span>
<span class="t" style="left:728.60px;top:505.70px;font-size:18.8px;color:#595959;transform:translateX(-50%) scaleX(0.9949);transform-origin:center;">9</span>
<span class="t" style="left:755.00px;top:505.05px;font-size:19.5px;color:#fff;transform:scaleX(0.9009);transform-origin:left center;-webkit-text-stroke:0.3px #fff;">NURSE</span>
<span class="t" style="left:996.00px;top:505.05px;font-size:19.5px;color:#000;transform:scaleX(0.9890);transform-origin:left center;-webkit-text-stroke:0.3px #000;">Level 1</span>
<span class="t" style="left:1237.30px;top:505.05px;font-size:19.5px;color:#000;transform:scaleX(1.0156);transform-origin:left center;-webkit-text-stroke:0.3px #000;">Nurse Storage</span>
<span class="t" style="left:728.60px;top:536.27px;font-size:18.8px;color:#595959;transform:translateX(-50%) scaleX(1.0244);transform-origin:center;">10</span>
<span class="t" style="left:755.00px;top:535.62px;font-size:19.5px;color:#fff;transform:scaleX(0.9009);transform-origin:left center;-webkit-text-stroke:0.3px #fff;">NURSE</span>
<span class="t" style="left:996.00px;top:535.62px;font-size:19.5px;color:#000;transform:scaleX(0.9890);transform-origin:left center;-webkit-text-stroke:0.3px #000;">Level 1</span>
<span class="t" style="left:1237.30px;top:535.62px;font-size:19.5px;color:#000;transform:scaleX(1.0711);transform-origin:left center;-webkit-text-stroke:0.3px #000;">Nurse Toilet</span>
<span class="t" style="left:728.60px;top:566.84px;font-size:18.8px;color:#595959;transform:translateX(-50%) scaleX(1.0974);transform-origin:center;">11</span>
<span class="t" style="left:754.00px;top:566.19px;font-size:19.5px;color:#000;transform:scaleX(0.9447);transform-origin:left center;-webkit-text-stroke:0.3px #000;">STUDENT</span>
<span class="t" style="left:845.50px;top:566.19px;font-size:19.5px;color:#000;transform:scaleX(0.8670);transform-origin:left center;-webkit-text-stroke:0.3px #000;">SERVICES</span>
<span class="t" style="left:996.00px;top:566.19px;font-size:19.5px;color:#000;transform:scaleX(0.9890);transform-origin:left center;-webkit-text-stroke:0.3px #000;">Level 1</span>
<span class="t" style="left:1237.30px;top:566.19px;font-size:19.5px;color:#000;transform:scaleX(1.0485);transform-origin:left center;-webkit-text-stroke:0.3px #000;">Social Worker Office</span>
<span class="t" style="left:728.60px;top:597.41px;font-size:18.8px;color:#595959;transform:translateX(-50%) scaleX(1.0244);transform-origin:center;">12</span>
<span class="t" style="left:754.00px;top:596.76px;font-size:19.5px;color:#000;transform:scaleX(0.9447);transform-origin:left center;-webkit-text-stroke:0.3px #000;">STUDENT</span>
<span class="t" style="left:845.50px;top:596.76px;font-size:19.5px;color:#000;transform:scaleX(0.8670);transform-origin:left center;-webkit-text-stroke:0.3px #000;">SERVICES</span>
<span class="t" style="left:996.00px;top:596.76px;font-size:19.5px;color:#000;transform:scaleX(0.9890);transform-origin:left center;-webkit-text-stroke:0.3px #000;">Level 1</span>
<span class="t" style="left:1237.30px;top:596.76px;font-size:19.5px;color:#000;transform:scaleX(1.0523);transform-origin:left center;-webkit-text-stroke:0.3px #000;">Therapy Office</span>
<span class="t" style="left:728.60px;top:627.98px;font-size:18.8px;color:#595959;transform:translateX(-50%) scaleX(1.0244);transform-origin:center;">13</span>
<span class="t" style="left:755.00px;top:627.33px;font-size:19.5px;color:#000;transform:scaleX(0.9832);transform-origin:left center;-webkit-text-stroke:0.3px #000;">DINING</span>
<span class="t" style="left:996.00px;top:627.33px;font-size:19.5px;color:#000;transform:scaleX(0.9890);transform-origin:left center;-webkit-text-stroke:0.3px #000;">Level 1</span>
<span class="t" style="left:1237.30px;top:627.33px;font-size:19.5px;color:#000;transform:scaleX(1.0300);transform-origin:left center;-webkit-text-stroke:0.3px #000;">Cafeteria</span>
<span class="t" style="left:728.60px;top:658.55px;font-size:18.8px;color:#595959;transform:translateX(-50%) scaleX(1.0244);transform-origin:center;">14</span>
<span class="t" style="left:755.00px;top:657.90px;font-size:19.5px;color:#000;transform:scaleX(0.9832);transform-origin:left center;-webkit-text-stroke:0.3px #000;">DINING</span>
<span class="t" style="left:996.00px;top:657.90px;font-size:19.5px;color:#000;transform:scaleX(0.9890);transform-origin:left center;-webkit-text-stroke:0.3px #000;">Level 1</span>
<span class="t" style="left:1237.30px;top:657.90px;font-size:19.5px;color:#000;transform:scaleX(1.0346);transform-origin:left center;-webkit-text-stroke:0.3px #000;">Kitchen</span>
<span class="t" style="left:728.60px;top:689.12px;font-size:18.8px;color:#595959;transform:translateX(-50%) scaleX(1.0244);transform-origin:center;">15</span>
<span class="t" style="left:755.00px;top:688.47px;font-size:19.5px;color:#000;transform:scaleX(0.9832);transform-origin:left center;-webkit-text-stroke:0.3px #000;">DINING</span>
<span class="t" style="left:996.00px;top:688.47px;font-size:19.5px;color:#000;transform:scaleX(0.9890);transform-origin:left center;-webkit-text-stroke:0.3px #000;">Level 1</span>
<span class="t" style="left:1237.30px;top:688.47px;font-size:19.5px;color:#000;transform:scaleX(1.0550);transform-origin:left center;-webkit-text-stroke:0.3px #000;">Kitchen Office</span>
<span class="t" style="left:728.60px;top:719.69px;font-size:18.8px;color:#595959;transform:translateX(-50%) scaleX(1.0244);transform-origin:center;">16</span>
<span class="t" style="left:755.00px;top:719.04px;font-size:19.5px;color:#000;transform:scaleX(0.9832);transform-origin:left center;-webkit-text-stroke:0.3px #000;">DINING</span>
<span class="t" style="left:996.00px;top:719.04px;font-size:19.5px;color:#000;transform:scaleX(0.9890);transform-origin:left center;-webkit-text-stroke:0.3px #000;">Level 1</span>
<span class="t" style="left:1237.30px;top:719.04px;font-size:19.5px;color:#000;transform:scaleX(1.0273);transform-origin:left center;-webkit-text-stroke:0.3px #000;">Pantry</span>
<span class="t" style="left:728.60px;top:750.26px;font-size:18.8px;color:#595959;transform:translateX(-50%) scaleX(1.0244);transform-origin:center;">17</span>
<span class="t" style="left:755.00px;top:749.61px;font-size:19.5px;color:#000;transform:scaleX(0.9832);transform-origin:left center;-webkit-text-stroke:0.3px #000;">DINING</span>
<span class="t" style="left:996.00px;top:749.61px;font-size:19.5px;color:#000;transform:scaleX(0.9890);transform-origin:left center;-webkit-text-stroke:0.3px #000;">Level 1</span>
<span class="t" style="left:1237.30px;top:749.61px;font-size:19.5px;color:#000;transform:scaleX(1.0071);transform-origin:left center;-webkit-text-stroke:0.3px #000;">Storage</span>
<span class="t" style="left:728.60px;top:780.83px;font-size:18.8px;color:#595959;transform:translateX(-50%) scaleX(1.0244);transform-origin:center;">18</span>
<span class="t" style="left:755.00px;top:780.18px;font-size:19.5px;color:#000;transform:scaleX(0.9170);transform-origin:left center;-webkit-text-stroke:0.3px #000;">CLASSROOMS</span>
<span class="t" style="left:996.00px;top:780.18px;font-size:19.5px;color:#000;transform:scaleX(0.9890);transform-origin:left center;-webkit-text-stroke:0.3px #000;">Level 1</span>
<span class="t" style="left:1237.30px;top:780.18px;font-size:19.5px;color:#000;transform:scaleX(1.0549);transform-origin:left center;-webkit-text-stroke:0.3px #000;">Kindergarten</span>
<span class="t" style="left:728.60px;top:811.40px;font-size:18.8px;color:#595959;transform:translateX(-50%) scaleX(1.0244);transform-origin:center;">19</span>
<span class="t" style="left:755.00px;top:810.75px;font-size:19.5px;color:#000;transform:scaleX(0.9170);transform-origin:left center;-webkit-text-stroke:0.3px #000;">CLASSROOMS</span>
<span class="t" style="left:996.00px;top:810.75px;font-size:19.5px;color:#000;transform:scaleX(0.9890);transform-origin:left center;-webkit-text-stroke:0.3px #000;">Level 1</span>
<span class="t" style="left:1237.30px;top:810.75px;font-size:19.5px;color:#000;transform:scaleX(1.0549);transform-origin:left center;-webkit-text-stroke:0.3px #000;">Kindergarten</span>
<span class="t" style="left:728.60px;top:841.97px;font-size:18.8px;color:#595959;transform:translateX(-50%) scaleX(1.0244);transform-origin:center;">20</span>
<span class="t" style="left:755.00px;top:841.32px;font-size:19.5px;color:#000;transform:scaleX(0.9170);transform-origin:left center;-webkit-text-stroke:0.3px #000;">CLASSROOMS</span>
<span class="t" style="left:996.00px;top:841.32px;font-size:19.5px;color:#000;transform:scaleX(0.9890);transform-origin:left center;-webkit-text-stroke:0.3px #000;">Level 1</span>
<span class="t" style="left:1237.30px;top:841.32px;font-size:19.5px;color:#000;transform:scaleX(1.0767);transform-origin:left center;-webkit-text-stroke:0.3px #000;">Kindergarten Toilet</span>
<span class="t" style="left:728.60px;top:872.54px;font-size:18.8px;color:#595959;transform:translateX(-50%) scaleX(1.0244);transform-origin:center;">21</span>
<span class="t" style="left:755.00px;top:871.89px;font-size:19.5px;color:#000;transform:scaleX(0.9170);transform-origin:left center;-webkit-text-stroke:0.3px #000;">CLASSROOMS</span>
<span class="t" style="left:996.00px;top:871.89px;font-size:19.5px;color:#000;transform:scaleX(0.9890);transform-origin:left center;-webkit-text-stroke:0.3px #000;">Level 1</span>
<span class="t" style="left:1237.30px;top:871.89px;font-size:19.5px;color:#000;transform:scaleX(1.0767);transform-origin:left center;-webkit-text-stroke:0.3px #000;">Kindergarten Toilet</span>
<span class="t" style="left:728.60px;top:903.11px;font-size:18.8px;color:#595959;transform:translateX(-50%) scaleX(1.0244);transform-origin:center;">22</span>
<span class="t" style="left:755.00px;top:902.46px;font-size:19.5px;color:#000;transform:scaleX(0.9170);transform-origin:left center;-webkit-text-stroke:0.3px #000;">CLASSROOMS</span>
<span class="t" style="left:996.00px;top:902.46px;font-size:19.5px;color:#000;transform:scaleX(0.9890);transform-origin:left center;-webkit-text-stroke:0.3px #000;">Level 1</span>
<span class="t" style="left:1237.30px;top:902.46px;font-size:19.5px;color:#000;transform:scaleX(1.0263);transform-origin:left center;-webkit-text-stroke:0.3px #000;">1st grade classroom</span>
<span class="t" style="left:728.60px;top:933.68px;font-size:18.8px;color:#595959;transform:translateX(-50%) scaleX(1.0244);transform-origin:center;">23</span>
<span class="t" style="left:755.00px;top:933.03px;font-size:19.5px;color:#000;transform:scaleX(0.9170);transform-origin:left center;-webkit-text-stroke:0.3px #000;">CLASSROOMS</span>
<span class="t" style="left:996.00px;top:933.03px;font-size:19.5px;color:#000;transform:scaleX(0.9890);transform-origin:left center;-webkit-text-stroke:0.3px #000;">Level 1</span>
<span class="t" style="left:1237.30px;top:933.03px;font-size:19.5px;color:#000;transform:scaleX(1.0263);transform-origin:left center;-webkit-text-stroke:0.3px #000;">1st grade classroom</span>
<span class="t" style="left:728.60px;top:964.25px;font-size:18.8px;color:#1e7145;transform:translateX(-50%) scaleX(1.0244);transform-origin:center;">24</span>
<span class="t" style="left:755.00px;top:963.60px;font-size:19.5px;color:#000;transform:scaleX(0.9170);transform-origin:left center;-webkit-text-stroke:0.3px #000;">CLASSROOMS</span>
<span class="t" style="left:996.00px;top:963.60px;font-size:19.5px;color:#000;transform:scaleX(0.9890);transform-origin:left center;-webkit-text-stroke:0.3px #000;">Level 1</span>
<span class="t" style="left:1237.30px;top:963.60px;font-size:19.5px;color:#000;transform:scaleX(1.0329);transform-origin:left center;-webkit-text-stroke:0.3px #000;">2nd grade classroom</span>
<svg style="left:560.00px;top:490.00px" width="140" height="130" viewBox="0 0 140 130" ><g stroke="#2c3f56" stroke-width="4.4" stroke-linecap="round" fill="none"><path d="M39.3 8.6L39.3 19.3"/><path d="M21.5 15.7L30.3 23.9"/><path d="M50.2 21.6L58.3 13.0"/><path d="M13.6 33.8L24.5 33.8"/><path d="M19.1 52.5L27.3 44.1"/></g><path d="M39.5 33.9L115.9 58.0L83.2 78.2L63.8 110.2Z" fill="#2c3f56" stroke="#2c3f56" stroke-width="15" stroke-linejoin="round"/><path d="M39.5 33.9L115.9 58.0L83.2 78.2L63.8 110.2Z" fill="#ff7a1e" stroke="#ff7a1e" stroke-width="6" stroke-linejoin="round"/></svg>
</div></body></html>
